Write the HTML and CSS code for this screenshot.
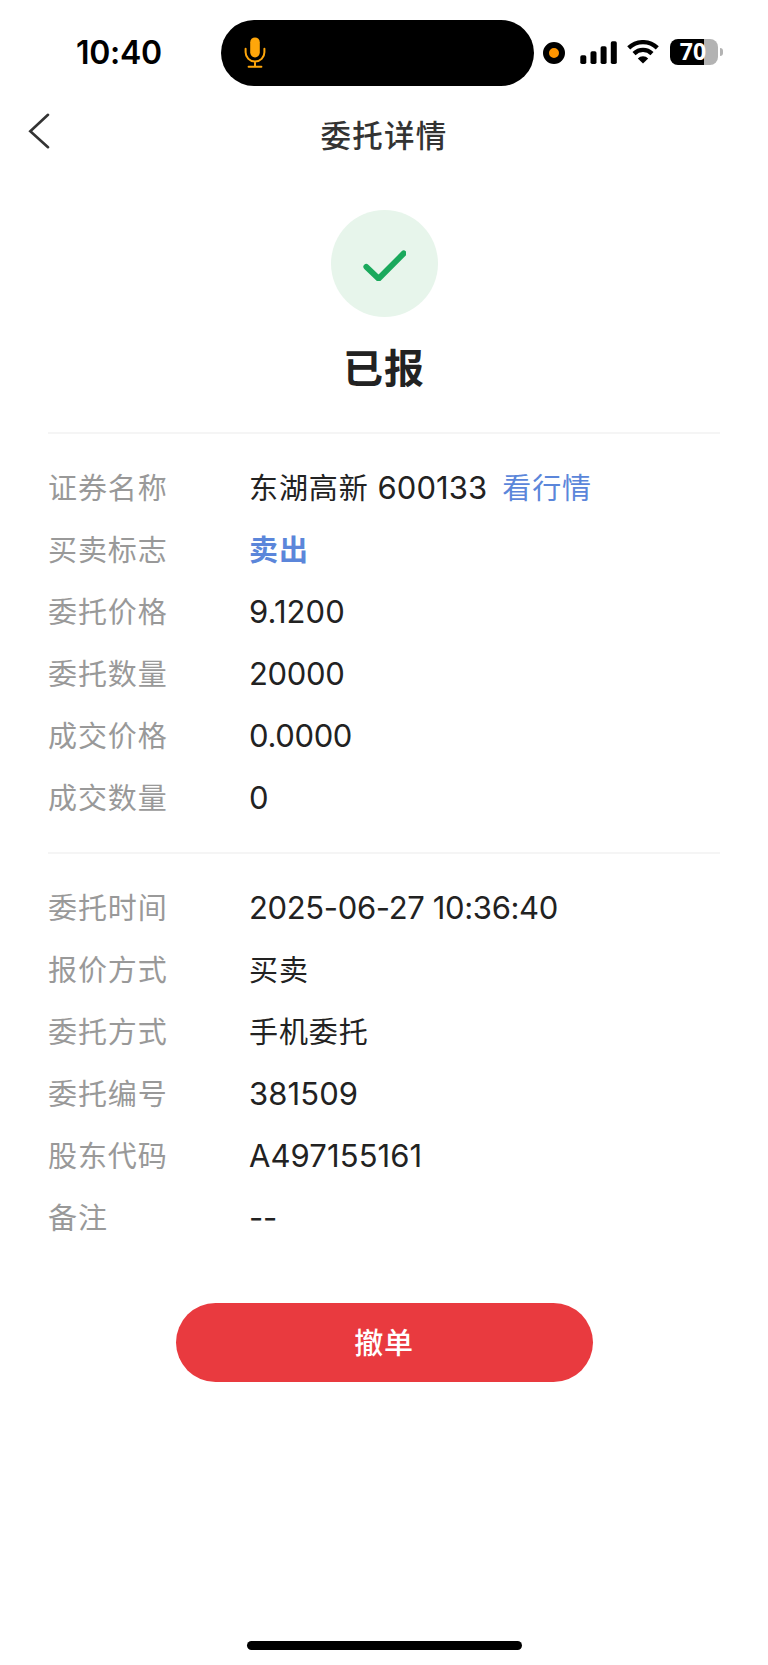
FILE: index.html
```
<!DOCTYPE html>
<html lang="zh-CN">
<head>
  <meta charset="UTF-8">
  <meta name="viewport" content="width=device-width, initial-scale=1.0">
  <title>委托详情</title>
  <link rel="stylesheet" href="styles.css">
</head>
<body>
  <div class="status-bar">
    <div class="time">10:40</div>
    <div class="island">
      <svg class="mic" width="22" height="32" viewBox="0 0 22 32">
        <rect x="6.2" y="0.4" width="9.6" height="20" rx="4.8" fill="#ffa60a"/>
        <path d="M1.6 11.8v3.4a9.4 9.4 0 0 0 18.8 0v-3.4M11 24.6v4.6M4.6 29.7h12.8" fill="none" stroke="#ffa60a" stroke-width="2" stroke-linecap="round"/>
      </svg>
    </div>
    <div class="rec-dot"></div>
    <svg class="signal" width="38" height="24" viewBox="0 0 38 24">
      <rect x="0.3" y="14.3" width="6" height="8.7" rx="1.7"/>
      <rect x="10.5" y="10.3" width="6" height="12.7" rx="1.7"/>
      <rect x="20.6" y="5.2" width="6" height="17.8" rx="1.7"/>
      <rect x="30.8" y="0.2" width="6" height="22.8" rx="1.7"/>
    </svg>
    <svg class="wifi" width="32" height="24" viewBox="0 0 32 24">
      <path d="M1.7 7.9a20.6 20.6 0 0 1 28.6 0M7 13.6a12.9 12.9 0 0 1 18 0" fill="none" stroke="#000" stroke-width="4.3"/>
      <path d="M16 23.6l-5.2-5.2a7.4 7.4 0 0 1 10.4 0z"/>
    </svg>
    <div class="battery">70</div>
    <div class="battery-tip"></div>
  </div>

  <div class="nav">
    <svg class="back" width="22" height="36" viewBox="0 0 22 36">
      <path d="M20 1.8L2.3 18.2l17.7 16" fill="none" stroke="#333" stroke-width="2.6" stroke-linecap="round"/>
    </svg>
    <div class="title">委托详情</div>
  </div>

  <div class="container">
    <div class="result">
      <div class="result-icon">
        <svg width="44" height="34" viewBox="0 0 44 34">
          <path d="M4.3 19.4L16.6 31.2 41.7 6" fill="none" stroke="#1aa95c" stroke-width="5.8" stroke-linecap="round" stroke-linejoin="round" transform="translate(0 .4)"/>
        </svg>
      </div>
      <h1>已报</h1>
    </div>

    <div class="section">
      <div class="row"><span class="label">证券名称</span><span class="value code"><span class="cn">东湖高新</span> 600133</span><a class="link">看行情</a></div>
      <div class="row"><span class="label">买卖标志</span><span class="cn sell">卖出</span></div>
      <div class="row"><span class="label">委托价格</span><span class="value code">9.1200</span></div>
      <div class="row"><span class="label">委托数量</span><span class="value">20000</span></div>
      <div class="row"><span class="label">成交价格</span><span class="value">0.0000</span></div>
      <div class="row"><span class="label">成交数量</span><span class="value">0</span></div>
    </div>

    <div class="section last">
      <div class="row"><span class="label">委托时间</span><span class="value">2025-06-27 10:36:40</span></div>
      <div class="row"><span class="label">报价方式</span><span class="cn">买卖</span></div>
      <div class="row"><span class="label">委托方式</span><span class="cn">手机委托</span></div>
      <div class="row"><span class="label">委托编号</span><span class="value code">381509</span></div>
      <div class="row"><span class="label">股东代码</span><span class="value code">A497155161</span></div>
      <div class="row"><span class="label">备注</span><span class="value">--</span></div>
    </div>

    <button class="cancel">撤单</button>
  </div>

  <div class="home-bar"></div>
</body>
</html>
```
FILE: styles.css
```
* {
  box-sizing: border-box;
}

body {
  margin: 0;
  height: 1665px;
  display: flex;
  flex-direction: column;
  background-color: #fff;
  font-family: Inter, "Noto Sans CJK SC", sans-serif;
  color: #222;
}

/* status bar */
.status-bar {
  display: flex;
  align-items: center;
  height: 106px;
  color: #000;
}

.time {
  width: 145px;
  margin: -1px 0 0 76px;
  font-size: 32px;
  font-weight: 600;
  letter-spacing: -0.3px;
}

.island {
  width: 313px;
  height: 66px;
  padding: 17px 0 0 23px;
  border-radius: 33px;
  background-color: #000;
}

.mic {
  display: block;
}

.rec-dot {
  width: 22px;
  height: 22px;
  margin-left: 9px;
  border: 6px solid #000;
  border-radius: 50%;
  background-color: #ff9500;
}

.signal {
  margin: -1px 0 0 15px;
}

.wifi {
  margin: -3px 0 0 9px;
}

.battery {
  width: 48px;
  height: 26px;
  margin: -2px 0 0 11px;
  padding-right: 2px;
  border-radius: 8px;
  background: linear-gradient(90deg, #000 70%, #b3b3b3 70%);
  color: #fff;
  font-family: "Open Sans", sans-serif;
  font-size: 23px;
  font-weight: 700;
  line-height: 25px;
  text-align: center;
}

.battery-tip {
  width: 3px;
  height: 8px;
  margin: -2px 0 0 2px;
  border-radius: 0 4px 4px 0;
  background-color: #b3b3b3;
}

/* title bar */
.nav {
  display: grid;
  grid-template-columns: 60px 1fr 60px;
  height: 60px;
}

.back {
  margin: 7px 0 0 28px;
}

.title {
  color: #333;
  font-size: 30.5px;
  font-weight: 500;
  letter-spacing: 1.2px;
  line-height: 60px;
  text-align: center;
}

.container {
  padding: 0 48px;
}

.result {
  display: flex;
  flex-direction: column;
  align-items: center;
  height: 266px;
  padding-top: 44px;
}

.result-icon {
  display: flex;
  align-items: center;
  justify-content: center;
  width: 107px;
  height: 107px;
  border-radius: 50%;
  background-color: #e7f5eb;
}

h1 {
  margin: 22px 0 0;
  font-size: 40px;
  font-weight: 700;
  letter-spacing: 1px;
  line-height: 60px;
}

/* order info */
.section {
  height: 420px;
  padding-top: 24px;
  border-top: 2px solid #f5f5f5;
}

.section.last {
  height: 451px;
}

.row {
  display: flex;
  height: 62px;
  line-height: 62px;
}

.label {
  width: 201px;
  color: #999;
}

.label,
.cn,
.link {
  font-size: 29px;
  letter-spacing: 0.9px;
}

.value {
  font-size: 31px;
  letter-spacing: -0.35px;
  line-height: 59px;
}

.code {
  letter-spacing: 0.1px;
}

.link {
  margin-left: 15px;
  color: #5b86da;
}

.sell {
  color: #5b86da;
  font-weight: 700;
}

.cancel {
  display: block;
  width: 417px;
  height: 79px;
  margin: 0 auto;
  padding: 0 0 3px;
  border: none;
  border-radius: 40px;
  background-color: #e93a3f;
  color: #fff;
  font-family: inherit;
  font-size: 29px;
  font-weight: 500;
  letter-spacing: 0.8px;
}

.home-bar {
  width: 275px;
  height: 9px;
  margin: auto auto 15px;
  border-radius: 5px;
  background-color: #000;
}
```
